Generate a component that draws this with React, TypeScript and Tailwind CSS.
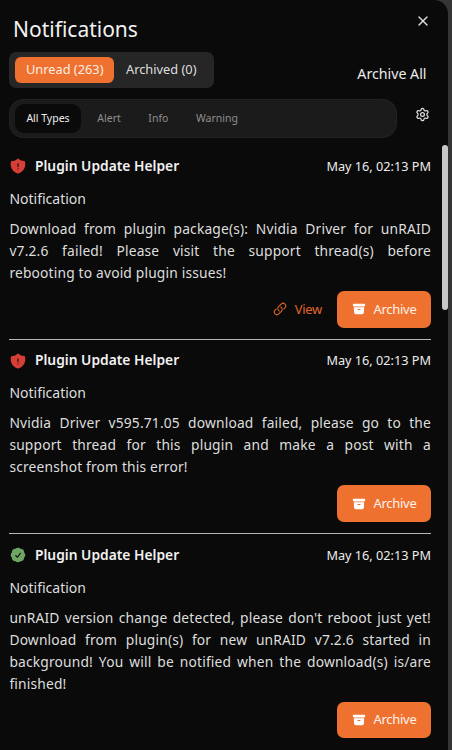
import React, { useState } from "react";
import {
  HiArchiveBox,
  HiCheckBadge,
  HiOutlineLink,
  HiShieldExclamation,
} from "react-icons/hi2";
import { Settings, X } from "lucide-react";

type Notification = {
  id: number;
  importance: "alert" | "info";
  title: string;
  subject: string;
  description: string;
  date: string;
  link?: string;
};

const notifications: Notification[] = [
  {
    id: 1,
    importance: "alert",
    title: "Plugin Update Helper",
    subject: "Notification",
    description:
      "Download from plugin package(s): Nvidia Driver for unRAID v7.2.6 failed! Please visit the support thread(s) before rebooting to avoid plugin issues!",
    date: "May 16, 02:13 PM",
    link: "#",
  },
  {
    id: 2,
    importance: "alert",
    title: "Plugin Update Helper",
    subject: "Notification",
    description:
      "Nvidia Driver v595.71.05 download failed, please go to the support thread for this plugin and make a post with a screenshot from this error!",
    date: "May 16, 02:13 PM",
  },
  {
    id: 3,
    importance: "info",
    title: "Plugin Update Helper",
    subject: "Notification",
    description:
      "unRAID version change detected, please don't reboot just yet! Download from plugin(s) for new unRAID v7.2.6 started in background! You will be notified when the download(s) is/are finished!",
    date: "May 16, 02:13 PM",
  },
];

const types = ["All Types", "Alert", "Info", "Warning"];

function NotificationItem({ item }: { item: Notification }) {
  return (
    <div className="border-b border-[#b5b5b5] pb-[11.2px] pt-[9px] last:border-b-0">
      <div className="flex h-6 items-center">
        {item.importance === "alert" ? (
          <HiShieldExclamation className="size-[18px] shrink-0 text-[#d63e36]" />
        ) : (
          <HiCheckBadge className="size-[18px] shrink-0 text-[#6fa562]" />
        )}
        <h3 className="ml-[7.6px] text-[13.8px] font-semibold text-[#f2f2f2]">{item.title}</h3>
        <span className="ml-auto text-[12.7px] text-[#ececec]">{item.date}</span>
      </div>
      <p className="mt-[9.6px] text-[14px] leading-[22px]">{item.subject}</p>
      <p className="mt-[7.8px] text-justify text-[13.8px] leading-[22px] tracking-[0.17px]">
        {item.description}
      </p>
      <div className="mt-[7.2px] flex items-center justify-end gap-[15px] text-[13px] tracking-[-0.3px]">
        {item.link && (
          <a href={item.link} className="flex items-center gap-2 text-[#e0662a]">
            <HiOutlineLink className="size-[14px]" strokeWidth={1.8} />
            View
          </a>
        )}
        <button className="flex h-[36.6px] w-[94px] items-center justify-center gap-2 rounded-[7px] bg-[#ee7130] text-[#fff1e9]">
          <HiArchiveBox className="size-[14px] text-white" />
          Archive
        </button>
      </div>
    </div>
  );
}

export default function App() {
  const [tab, setTab] = useState("unread");
  const [type, setType] = useState("All Types");

  return (
    <div className="h-[750px] w-[452px] overflow-hidden bg-[#353535] pr-[4px] font-['Noto_Sans',sans-serif] text-[#dedede]">
      <div className="flex h-full flex-col rounded-tr-[14px] bg-[#0a0a0a]">
        <div className="flex h-[52px] shrink-0 justify-between pl-[13px] pr-[18px]">
          <h2 className="pt-[13px] text-[21px] leading-[32px] text-[#f2f2f2]">Notifications</h2>
          <button className="mt-[13px] flex size-[15px] items-center justify-center">
            <X className="size-[16px] shrink-0" />
          </button>
        </div>

        <div className="flex shrink-0 items-center justify-between pl-[9px] pr-[21.5px]">
          <div className="flex h-[36px] w-[205px] items-center rounded-[7px] bg-[#262626] px-[6px] text-[12.8px]">
            <button
              onClick={() => setTab("unread")}
              className={`h-[26px] w-[100px] rounded-[6px] ${tab === "unread" ? "bg-[#ee7130] text-[#ffede2]" : ""}`}
            >
              Unread (263)
            </button>
            <button
              onClick={() => setTab("archived")}
              className={`h-[26px] w-[94px] rounded-[6px] ${tab === "archived" ? "bg-[#ee7130] text-[#ffede2]" : ""}`}
            >
              Archived (0)
            </button>
          </div>
          <button className="mt-[8px] text-[14.2px] text-[#ececec]">Archive All</button>
        </div>

        <div className="mt-[11px] flex shrink-0 pl-[9px] pr-[17.7px]">
          <div className="flex h-[39px] w-[388px] items-center rounded-[14px] border border-[#222] bg-[#1b1b1b] pl-[5px] text-[10.5px] text-[#8f8f8f]">
            {types.map((t) => (
              <button
                key={t}
                onClick={() => setType(t)}
                className={
                  type === t
                    ? "mr-[2.5px] h-[29px] w-[66px] rounded-[9px] bg-[#0a0a0a] text-[#ededed]"
                    : "px-[13.8px]"
                }
              >
                {t}
              </button>
            ))}
          </div>
          <button className="ml-auto mt-[7.5px] flex h-[15px] items-center">
            <Settings className="size-[15px]" />
          </button>
        </div>

        <div className="mt-[7.4px] flex min-h-0 flex-1 justify-between overflow-hidden pl-[9.4px]">
          <div className="w-[421.6px]">
            {notifications.map((item) => (
              <NotificationItem key={item.id} item={item} />
            ))}
          </div>
          <div className="h-[165px] w-[6px] rounded-full bg-[#c8c8c8]" />
        </div>
      </div>
    </div>
  );
}
